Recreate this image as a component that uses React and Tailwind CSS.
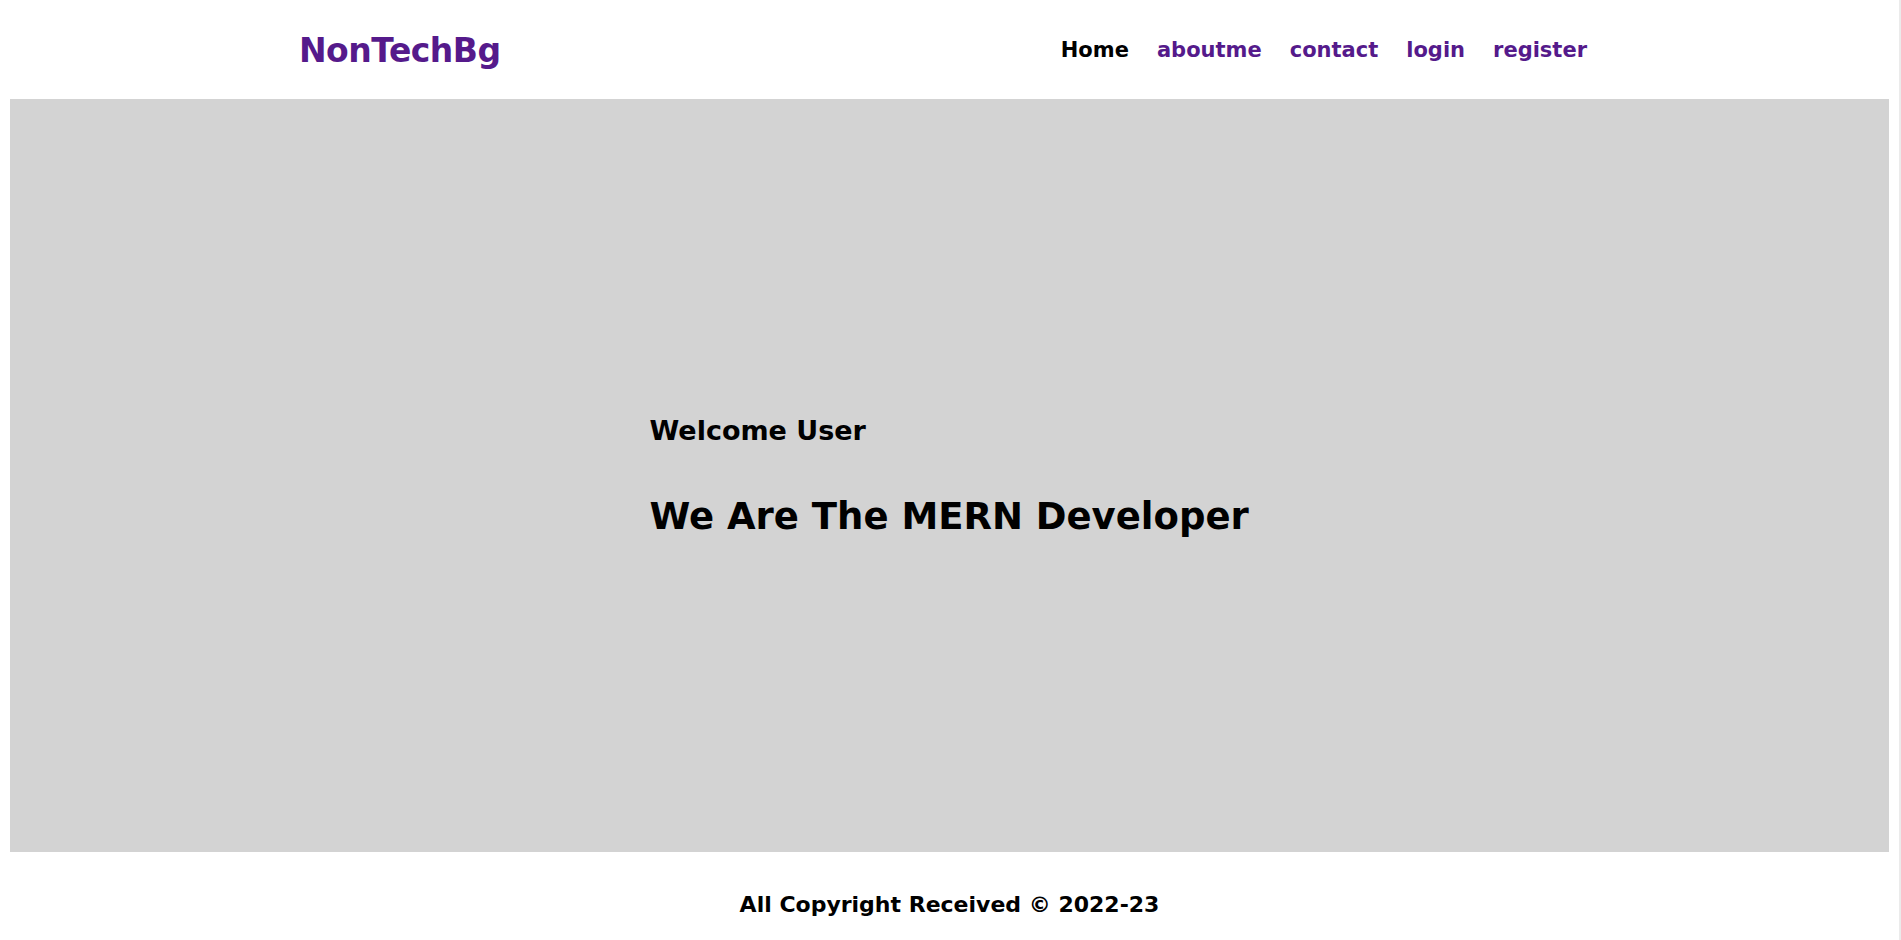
import React from "react";

const font = { fontFamily: '"Comic Sans MS", "DejaVu Sans", sans-serif' };

export default function App() {
  return (
    <div className="flex min-h-[940px] w-full bg-white text-black" style={font}>
      <div className="flex flex-1 flex-col pl-[10px] pr-[10px]">
        <nav className="flex h-[99px] items-center justify-between pl-[289px] pr-[302px] pt-[2px]">
          <a className="text-[33px] font-bold tracking-[-0.5px] text-[#551a8b]">NonTechBg</a>
          <ul className="flex items-center gap-[28px] text-[21px] font-bold">
            <li className="text-black">Home</li>
            <li className="text-[#551a8b]">aboutme</li>
            <li className="text-[#551a8b]">contact</li>
            <li className="text-[#551a8b]">login</li>
            <li className="text-[#551a8b]">register</li>
          </ul>
        </nav>
        <section className="flex h-[753px] items-center justify-center bg-[#d3d3d3]">
          <div className="flex w-[600px] flex-col">
            <p className="text-[27px] font-bold leading-none">Welcome User</p>
            <h1 className="mt-[54px] text-[37px] font-bold leading-none">We Are The MERN Developer</h1>
          </div>
        </section>
        <footer className="flex h-[88px] items-center justify-center pt-[16px]">
          <p className="text-[22px] font-bold">All Copyright Received © 2022-23</p>
        </footer>
      </div>
      <div className="w-[2px] bg-[#ebebeb]" />
    </div>
  );
}
